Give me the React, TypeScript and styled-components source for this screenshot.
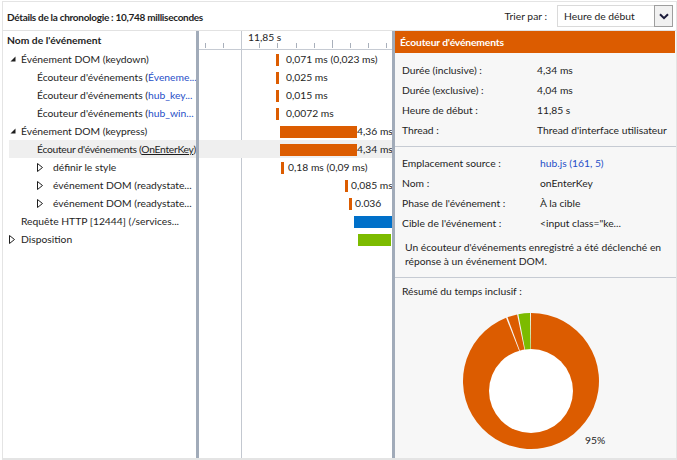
import React from "react";
import styled, { createGlobalStyle } from "styled-components";

const GlobalStyle = createGlobalStyle`
  html, body {
    margin: 0;
    padding: 0;
    background: #ffffff;
  }
  body {
    font-family: Lato, "Open Sans", sans-serif;
    font-size: 10.3px;
    color: #1e1e1e;
  }
`;

const ORANGE = "#dc5c00";
const BLUE = "#0070c9";
const GREEN = "#7cbb00";
const LINK = "#1f4fc8";
const SPLIT = "#a1abb9";

const Frame = styled.div`
  box-sizing: border-box;
  width: 675px;
  height: 459px;
  margin: 1px 0 0 2px;
  border: 1px solid #e4e4e4;
  border-bottom-width: 2px;
  display: flex;
  flex-direction: column;
  overflow: hidden;
`;

const Toolbar = styled.div`
  box-sizing: border-box;
  height: 29px;
  flex: none;
  display: flex;
  align-items: center;
  padding: 0 3px 0 4px;
  border-bottom: 1px solid #e2e2e2;
`;

const Title = styled.div`
  font-weight: 700;
  font-size: 10px;
  letter-spacing: -0.3px;
  flex: 1;
  padding-top: 2px;
`;

const SortLabel = styled.span`
  margin-right: 10px;
`;

const Select = styled.div`
  box-sizing: border-box;
  width: 116px;
  height: 22px;
  border: 1px solid #dadada;
  display: flex;
  align-items: center;
  background: #fff;
`;

const SelectText = styled.span`
  flex: 1;
  padding-left: 6px;
`;

const SelectButton = styled.div`
  box-sizing: border-box;
  width: 19px;
  height: 22px;
  margin: -1px -1px -1px 0;
  border: 1px solid #9e9e9e;
  background: #f1f1f1;
  display: flex;
  align-items: center;
  justify-content: center;
`;

const Body = styled.div`
  flex: 1;
  display: flex;
  min-height: 0;
`;

const Splitter = styled.div`
  width: 3px;
  flex: none;
  background: ${SPLIT};
`;

/* ---------- tree ---------- */

const TreePanel = styled.div`
  width: 193px;
  flex: none;
  overflow: hidden;
`;

const ColumnHeader = styled.div`
  height: 19px;
  line-height: 19px;
  padding-left: 4px;
  font-weight: 700;
`;

const TreeRow = styled.div<{ $pad: number; $selected?: boolean }>`
  height: 18px;
  margin-left: 6px;
  padding-left: ${(p) => p.$pad}px;
  display: flex;
  align-items: center;
  white-space: nowrap;
  overflow: hidden;
  background: ${(p) => (p.$selected ? "#efefef" : "transparent")};
`;

const TreeLabel = styled.span<{ $tight?: boolean }>`
  letter-spacing: ${(p) => (p.$tight ? "-0.28px" : "normal")};
`;

const ToggleCell = styled.span<{ $w: number }>`
  width: ${(p) => p.$w}px;
  flex: none;
  display: flex;
  align-items: center;
`;

const Link = styled.span`
  color: ${LINK};
`;

const Underlined = styled.span`
  text-decoration: underline;
`;

/* ---------- timeline ---------- */

const TimelinePanel = styled.div`
  width: 193px;
  flex: none;
  position: relative;
  overflow: hidden;
`;

const RulerHeader = styled.div`
  box-sizing: border-box;
  position: relative;
  height: 19px;
  border-bottom: 1px solid #c6cbd3;
  padding-left: 49px;
  line-height: 13px;
`;

const Ruler = styled.svg`
  position: absolute;
  left: 0;
  bottom: 0;
`;

const GridLine = styled.div`
  position: absolute;
  left: 42px;
  top: 0;
  bottom: 0;
  width: 1px;
  background: #c3c8d0;
`;

const BarRow = styled.div<{ $selected?: boolean }>`
  position: relative;
  height: 18px;
  display: flex;
  align-items: center;
  white-space: nowrap;
  background: ${(p) => (p.$selected ? "#efefef" : "transparent")};
`;

const Bar = styled.div<{ $color: string }>`
  height: 12px;
  margin-top: 1px;
  flex: none;
  background: ${(p) => p.$color};
`;

const BarLabel = styled.span`
  flex: none;
`;

/* ---------- details ---------- */

const DetailsPanel = styled.div`
  flex: 1;
  background: #f7f7f7;
  display: flex;
  flex-direction: column;
  overflow: hidden;
`;

const DetailsHeader = styled.div`
  height: 22px;
  line-height: 22px;
  background: ${ORANGE};
  color: #fff;
  font-weight: 700;
  letter-spacing: -0.15px;
  padding-left: 5px;
  margin-right: 1px;
`;

const Section = styled.div<{ $top: number; $bottom: number; $line?: boolean }>`
  padding: ${(p) => p.$top}px 0 ${(p) => p.$bottom}px 7px;
  border-bottom: ${(p) => (p.$line ? "1px solid #c6cbd3" : "none")};
`;

const PropGrid = styled.div<{ $labelW: number }>`
  display: grid;
  grid-template-columns: ${(p) => p.$labelW}px 1fr;
  grid-auto-rows: 20px;
  align-items: center;
  white-space: nowrap;
`;

const Description = styled.p`
  margin: 7px 0 0 3px;
  line-height: 14px;
  white-space: nowrap;
`;

const SummaryTitle = styled.div`
  line-height: 14px;
`;

const Chart = styled.svg`
  display: block;
  margin: 8px 0 0 54px;
`;

type TreeItem = {
  level: number;
  toggle?: "open" | "closed";
  selected?: boolean;
  content: React.ReactNode;
};

const treeItems: TreeItem[] = [
  { level: 1, toggle: "open", content: "Événement DOM (keydown)" },
  {
    level: 2,
    content: (
      <>
        Écouteur d'événements (<Link>Éveneme...</Link>
      </>
    ),
  },
  {
    level: 2,
    content: (
      <>
        Écouteur d'événements (<Link>hub_key...</Link>
      </>
    ),
  },
  {
    level: 2,
    content: (
      <>
        Écouteur d'événements (<Link>hub_win...</Link>
      </>
    ),
  },
  { level: 1, toggle: "open", content: "Événement DOM (keypress)" },
  {
    level: 2,
    selected: true,
    content: (
      <>
        Écouteur d'événements (<Underlined>OnEnterKey</Underlined>)
      </>
    ),
  },
  { level: 3, toggle: "closed", content: "définir le style" },
  { level: 3, toggle: "closed", content: "événement DOM (readystate..." },
  { level: 3, toggle: "closed", content: "événement DOM (readystate..." },
  { level: 1, content: "Requête HTTP [12444] (/services..." },
  { level: 1, toggle: "closed", content: "Disposition" },
];

type BarItem = {
  start: number;
  width: number;
  gap: number;
  color: string;
  label?: string;
  selected?: boolean;
};

const bars: BarItem[] = [
  { start: 77, width: 3, gap: 7, color: ORANGE, label: "0,071 ms (0,023 ms)" },
  { start: 77, width: 3, gap: 7, color: ORANGE, label: "0,025 ms" },
  { start: 77, width: 3, gap: 7, color: ORANGE, label: "0,015 ms" },
  { start: 77, width: 3, gap: 7, color: ORANGE, label: "0,0072 ms" },
  { start: 81, width: 77, gap: 0, color: ORANGE, label: "4,36 ms" },
  { start: 81, width: 77, gap: 0, color: ORANGE, label: "4,34 ms", selected: true },
  { start: 82, width: 3, gap: 4, color: ORANGE, label: "0,18 ms (0,09 ms)" },
  { start: 146, width: 3, gap: 3, color: ORANGE, label: "0,085 ms" },
  { start: 150, width: 3, gap: 3, color: ORANGE, label: "0.036" },
  { start: 155, width: 45, gap: 0, color: BLUE },
  { start: 159, width: 33, gap: 0, color: GREEN },
];

const OpenArrow = () => (
  <svg width="6" height="6" viewBox="0 0 6 6" style={{ marginLeft: 1 }}>
    <path d="M5.5 0.5 L5.5 5.5 L0.5 5.5 Z" fill="#1e1e1e" />
  </svg>
);

const ClosedArrow = () => (
  <svg width="6" height="9" viewBox="0 0 6 9">
    <path d="M0.5 0.5 L5.5 4.5 L0.5 8.5 Z" fill="none" stroke="#1e1e1e" strokeWidth="1" />
  </svg>
);

const Chevron = () => (
  <svg width="10" height="7" viewBox="0 0 10 7">
    <path d="M1 1.2 L5 5.2 L9 1.2" fill="none" stroke="#1b1b3a" strokeWidth="2" />
  </svg>
);

function TreeRowView({ item }: { item: TreeItem }) {
  const textStart = 12 + 16 * (item.level - 1);
  const cellW = item.toggle ? (item.level === 1 ? 12 : 16) : 0;
  return (
    <TreeRow $pad={textStart - cellW} $selected={item.selected}>
      {item.toggle && (
        <ToggleCell $w={cellW}>
          {item.toggle === "open" ? <OpenArrow /> : <ClosedArrow />}
        </ToggleCell>
      )}
      <TreeLabel $tight={item.selected}>{item.content}</TreeLabel>
    </TreeRow>
  );
}

function RulerTicks() {
  const ticks = Array.from({ length: 11 }, (_, i) => i);
  return (
    <Ruler width="193" height="19">
      {ticks.map((i) => {
        if (i === 2) return null;
        const x = Math.round(6 + i * 18.1) + 0.5;
        const h = i === 7 ? 8 : 5;
        return <line key={i} x1={x} x2={x} y1={18 - h} y2={18} stroke="#a9b0bb" strokeWidth="1" />;
      })}
    </Ruler>
  );
}

const wedge = (cx: number, cy: number, r: number, a0: number, a1: number) => {
  const pt = (a: number) => [
    cx + r * Math.sin((a * Math.PI) / 180),
    cy - r * Math.cos((a * Math.PI) / 180),
  ];
  const [x0, y0] = pt(a0);
  const [x1, y1] = pt(a1);
  const large = a1 - a0 > 180 ? 1 : 0;
  return `M${cx} ${cy} L${x0} ${y0} A${r} ${r} 0 ${large} 1 ${x1} ${y1} Z`;
};

const slices = [
  { a0: 0, a1: 338.5, color: ORANGE },
  { a0: 339.8, a1: 348.2, color: ORANGE },
  { a0: 349.3, a1: 359.2, color: GREEN },
];

function Donut() {
  return (
    <Chart width="160" height="150" viewBox="0 0 160 150">
      {slices.map((s, i) => (
        <path key={i} d={wedge(75, 75, 68, s.a0, s.a1)} fill={s.color} />
      ))}
      <circle cx="75" cy="85" r="42" fill="#ffffff" />
      <text x="129" y="138" fontSize="10.3" fill="#1e1e1e" fontFamily="Lato, sans-serif">
        95%
      </text>
    </Chart>
  );
}

export default function App() {
  return (
    <>
      <GlobalStyle />
      <Frame>
        <Toolbar>
          <Title>Détails de la chronologie : 10,748 millisecondes</Title>
          <SortLabel>Trier par :</SortLabel>
          <Select>
            <SelectText>Heure de début</SelectText>
            <SelectButton>
              <Chevron />
            </SelectButton>
          </Select>
        </Toolbar>
        <Body>
          <TreePanel>
            <ColumnHeader>Nom de l'événement</ColumnHeader>
            {treeItems.map((item, i) => (
              <TreeRowView key={i} item={item} />
            ))}
          </TreePanel>
          <Splitter />
          <TimelinePanel>
            <GridLine />
            <RulerHeader>
              11,85 s
              <RulerTicks />
            </RulerHeader>
            {bars.map((b, i) => (
              <BarRow key={i} $selected={b.selected} style={{ paddingLeft: b.start }}>
                <Bar $color={b.color} style={{ width: b.width }} />
                {b.label && <BarLabel style={{ marginLeft: b.gap }}>{b.label}</BarLabel>}
              </BarRow>
            ))}
          </TimelinePanel>
          <Splitter />
          <DetailsPanel>
            <DetailsHeader>Écouteur d'événements</DetailsHeader>
            <Section $top={7} $bottom={6} $line>
              <PropGrid $labelW={135}>
                <span>Durée (inclusive) :</span>
                <span>4,34 ms</span>
                <span>Durée (exclusive) :</span>
                <span>4,04 ms</span>
                <span>Heure de début :</span>
                <span>11,85 s</span>
                <span>Thread :</span>
                <span>Thread d'interface utilisateur</span>
              </PropGrid>
            </Section>
            <Section $top={6} $bottom={9} $line>
              <PropGrid $labelW={138}>
                <span>Emplacement source :</span>
                <Link>hub.js (161, 5)</Link>
                <span>Nom :</span>
                <span>onEnterKey</span>
                <span>Phase de l'événement :</span>
                <span>À la cible</span>
                <span>Cible de l'événement :</span>
                <span>&lt;input class="ke...</span>
              </PropGrid>
              <Description>
                Un écouteur d'événements enregistré a été déclenché en
                <br />
                réponse à un événement DOM.
              </Description>
            </Section>
            <Section $top={6} $bottom={0}>
              <SummaryTitle>Résumé du temps inclusif :</SummaryTitle>
              <Donut />
            </Section>
          </DetailsPanel>
        </Body>
      </Frame>
    </>
  );
}
